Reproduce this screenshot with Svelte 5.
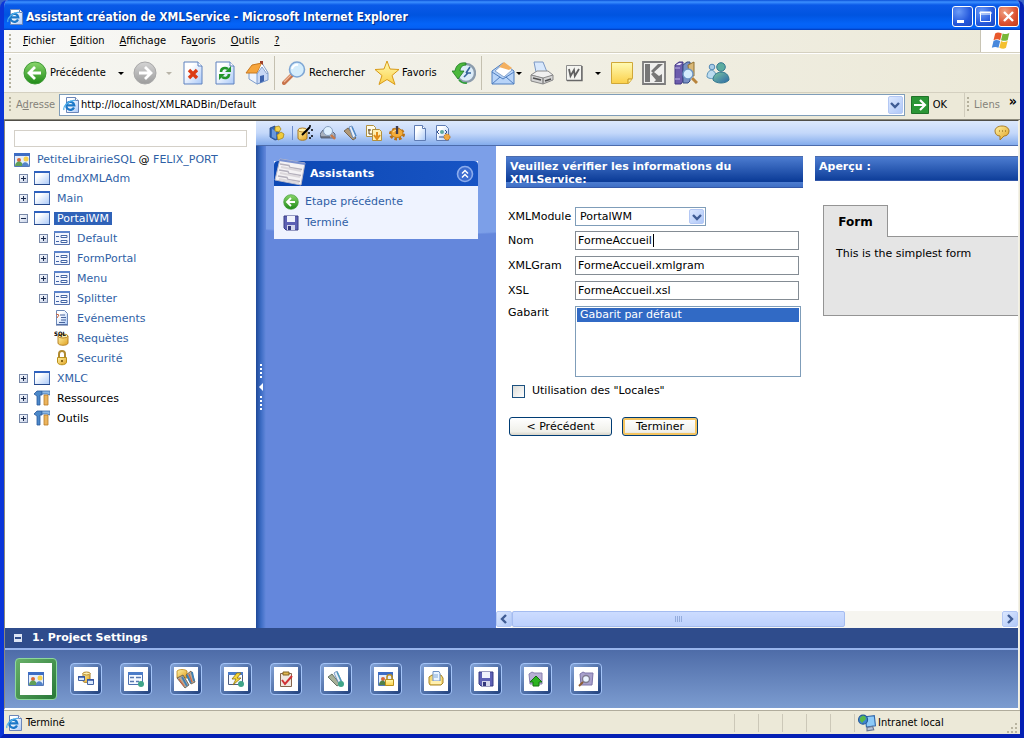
<script>
  let nom = "FormeAccueil";
  let xmlgram = "FormeAccueil.xmlgram";
  let xsl = "FormeAccueil.xsl";
  let xmlModule = "PortalWM";
  let gabarit = "defaut";
  let locales = false;
  let address = "http://localhost/XMLRADBin/Default";

  const menus = [
    ["", "F", "ichier"],
    ["", "E", "dition"],
    ["", "A", "ffichage"],
    ["Fa", "v", "oris"],
    ["", "O", "utils"],
    ["", "?", ""],
  ];

  let tree = [
    { label: "dmdXMLAdm", icon: "window", open: false },
    { label: "Main", icon: "window", open: false },
    {
      label: "PortalWM",
      icon: "window",
      open: true,
      selected: true,
      children: [
        { label: "Default", icon: "form", open: false },
        { label: "FormPortal", icon: "form", open: false },
        { label: "Menu", icon: "form", open: false },
        { label: "Splitter", icon: "form", open: false },
        { label: "Evénements", icon: "events" },
        { label: "Requètes", icon: "sql", mark: "SQL" },
        { label: "Securité", icon: "lock" },
      ],
    },
    { label: "XMLC", icon: "window", open: false },
    { label: "Ressources", icon: "tools", open: false, plain: true },
    { label: "Outils", icon: "tools", open: false, plain: true },
  ];

  const pageTools = [
    ["wizard", "Assistant"],
    ["printview", "Aperçu"],
    ["build", "Compiler"],
    ["convert", "Convertir"],
    ["gear", "Options"],
    ["page", "Nouveau"],
    ["pagegear", "Propriétés"],
  ];

  const projectTools = [
    ["project", "Projet"],
    ["network", "Connexions"],
    ["formball", "Formulaires"],
    ["dbtools", "Base de données"],
    ["flash", "Actions"],
    ["check", "Vérifier"],
    ["build", "Compiler"],
    ["projectlock", "Sécurité"],
    ["folder", "Documents"],
    ["floppy", "Enregistrer"],
    ["upload", "Publier"],
    ["inspect", "Inspecter"],
  ];

  function toggle(node) {
    node.open = !node.open;
    tree = tree;
  }
</script>

<svg class="defs" width="0" height="0" aria-hidden="true">
  <defs>
    <linearGradient id="gGreen" x1="0" y1="0" x2="0" y2="1">
      <stop offset="0" stop-color="#8ad66c" /><stop offset="1" stop-color="#1f8a17" />
    </linearGradient>
    <linearGradient id="gGrey" x1="0" y1="0" x2="0" y2="1">
      <stop offset="0" stop-color="#d4d4d4" /><stop offset="1" stop-color="#9c9c9c" />
    </linearGradient>
    <linearGradient id="gPage" x1="0" y1="0" x2="1" y2="1">
      <stop offset="0.3" stop-color="#fff" /><stop offset="1" stop-color="#a9c8f8" />
    </linearGradient>
    <linearGradient id="gGold" x1="0" y1="0" x2="1" y2="1">
      <stop offset="0" stop-color="#fff3a6" /><stop offset="1" stop-color="#e0a020" />
    </linearGradient>
    <linearGradient id="gNote" x1="0" y1="0" x2="0" y2="1">
      <stop offset="0" stop-color="#fffbb4" /><stop offset="1" stop-color="#fbd04a" />
    </linearGradient>
    <linearGradient id="gTeal" x1="0" y1="0" x2="1" y2="1">
      <stop offset="0" stop-color="#7cc8a0" /><stop offset="1" stop-color="#2b66a8" />
    </linearGradient>
  </defs>
  <symbol id="ie" viewBox="0 0 16 16">
    <path d="M3.500.5h9l3 3v12h-12z" fill="url(#gPage)" stroke="#6b86b8" />
    <path d="M12.500.5v3h3" fill="#fff" stroke="#6b86b8" />
    <path d="M11 10.500a4 4 0 1 1 .3-2.200H4" fill="none" stroke="#1c78c8" stroke-width="2.200" />
    <path d="M1 13C-.5 9.500 6 3 12 3.500" fill="none" stroke="#50b0ec" stroke-width="1.200" />
  </symbol>
  <symbol id="back" viewBox="0 0 24 24">
    <circle cx="12" cy="12" r="11" fill="url(#gGreen)" stroke="#3f9a36" />
    <path d="M12 6l-6 6 6 6M6.500 12H18" fill="none" stroke="#fff" stroke-width="2.800" />
  </symbol>
  <symbol id="forward" viewBox="0 0 24 24">
    <circle cx="12" cy="12" r="11" fill="url(#gGrey)" stroke="#a8a8a8" />
    <path d="M12 6l6 6-6 6M17.500 12H6" fill="none" stroke="#fff" stroke-width="2.800" />
  </symbol>
  <symbol id="stop" viewBox="0 0 24 24">
    <path d="M3 1h14l4 4v18H3z" fill="url(#gPage)" stroke="#5f82bf" />
    <path d="M17 1v4h4" fill="#fff" stroke="#5f82bf" />
    <path d="M8 9l8 8M16 9l-8 8" stroke="#dc3c14" stroke-width="3.400" />
  </symbol>
  <symbol id="refresh" viewBox="0 0 24 24">
    <path d="M3 1h14l4 4v18H3z" fill="url(#gPage)" stroke="#5f82bf" />
    <path d="M17 1v4h4" fill="#fff" stroke="#5f82bf" />
    <path d="M8 11c0-4 4-5 7-3M16 13c0 4-4 5-7 3" fill="none" stroke="#23962c" stroke-width="2.600" />
    <path d="M12 11h6V5zM12 13H6v6z" fill="#23962c" />
  </symbol>
  <symbol id="home" viewBox="0 0 24 24">
    <path d="M4 12v6l8 5 10-4v-9l-5-6z" fill="#eef4fd" stroke="#7d9ccc" />
    <path d="M12 23V12l5-8 6 8v7z" fill="#c8d8f5" stroke="#7d9ccc" />
    <path d="M1 12L7 4l10-2-5 10z" fill="#f6a53c" stroke="#c87820" />
    <path d="M17 2l6 10-1 1-5-7-5 7" fill="#fff" stroke="#8aa4cc" />
    <path d="M15 0h3v4l-3-2z" fill="#a04028" />
    <path d="M15 15l4-1v6l-4 2z" fill="#3d63ac" />
  </symbol>
  <symbol id="search" viewBox="0 0 24 24">
    <path d="M2 22l8-8" stroke="#c8744c" stroke-width="4" stroke-linecap="round" />
    <path d="M2 21l7-7" stroke="#f2b898" stroke-width="1.200" />
    <circle cx="15" cy="8.500" r="7.500" fill="#d4edfc" stroke="#7ea6d4" stroke-width="1.600" />
    <path d="M10 8a5 5 0 0 1 6-4" fill="none" stroke="#fff" stroke-width="2" />
  </symbol>
  <symbol id="star" viewBox="0 0 24 24">
    <path d="M12 0l3 8 9 .5-7 6 3 9-8-5-8 5 3-9-7-6L9 8z" fill="url(#gNote)" stroke="#d89a18" />
  </symbol>
  <symbol id="history" viewBox="0 0 24 24">
    <circle cx="14" cy="12" r="9" fill="#dcecf8" stroke="#8c9cac" stroke-width="2.400" />
    <path d="M14 12l4-6M14 12h5M12 16l4-4" fill="none" stroke="#36649c" stroke-width="1.600" />
    <path d="M14 2C8 1 4 4 3 10H0l6 8 6-8H8c0-3 2-6 6-6z" fill="#4cb83c" stroke="#1d7a24" stroke-width=".8" />
    <path d="M7 19a9 9 0 0 0 8 3" fill="none" stroke="#2f9c38" stroke-width="1.600" />
  </symbol>
  <symbol id="mail" viewBox="0 0 24 24">
    <path d="M1 10l11-8 11 8v13H1z" fill="#b8d4f8" stroke="#4f7ebf" />
    <path d="M4 10l9-8 8 7-8 7z" fill="#fff" stroke="#86a4cc" />
    <path d="M8 6l5-5 8 6-3 2z" fill="#f4b060" />
    <path d="M1 11l11 7 11-7M1 23l8-7M23 23l-8-7" fill="none" stroke="#4f7ebf" />
  </symbol>
  <symbol id="print" viewBox="0 0 24 24">
    <path d="M6 11L4 1h9l4 10z" fill="#d8e8fc" stroke="#7c98c4" />
    <path d="M1 14l6-4h11l5 4-8 4z" fill="#f0f0f0" stroke="#8c8c8c" />
    <path d="M1 14l12 3v6L1 20zM13 17l10-3v5l-10 4z" fill="#d4d4d4" stroke="#888" />
    <path d="M3 17l8 2M15 20l6-2" stroke="#505050" stroke-width="1.600" />
  </symbol>
  <symbol id="word" viewBox="0 0 24 24">
    <path d="M4.500 4.500h15v15h-15z" fill="#f4f4f0" stroke="#8c8c8c" />
    <path d="M5 19.500h15V5" fill="none" stroke="#686868" stroke-width="1.400" />
    <path d="M7 8l1.500 7L12 9l.8 6L17 8" fill="none" stroke="#606060" stroke-width="1.800" />
  </symbol>
  <symbol id="note" viewBox="0 0 24 24">
    <path d="M1.500 1.500h21v16l-4 5h-17z" fill="url(#gNote)" stroke="#d0a838" />
    <path d="M18 22v-4h4" fill="#fff0a0" stroke="#c09420" />
  </symbol>
  <symbol id="kas" viewBox="0 0 24 24">
    <path d="M1 1h22v22H1z" fill="#f0f0ee" stroke="#7c7c7c" stroke-width="1.800" />
    <path d="M3 3h5v18H3zM9 10l7-7h5l-10 9zM9 13l3-2 5 4 3-2v8h-8l2-2z" fill="#777" />
  </symbol>
  <symbol id="books" viewBox="0 0 24 24">
    <path d="M1 4l4-3h4v19l-2 3H1z" fill="#6c5cac" stroke="#443884" />
    <path d="M2 4l3-2h3L6 4z" fill="#e8e4f8" />
    <path d="M9 4l4-3h3v19l-2 2H9z" fill="#7890c4" stroke="#344c84" />
    <path d="M1 7h5M1 18h5" stroke="#c0b4e8" />
    <path d="M14 4l6-3v14h-5z" fill="#d8b878" stroke="#907030" />
    <path d="M18 17l5 5" stroke="#b8843c" stroke-width="3" />
    <circle cx="14" cy="13" r="5" fill="#d4ecfc" stroke="#6c94c4" stroke-width="1.400" />
  </symbol>
  <symbol id="people" viewBox="0 0 24 24">
    <circle cx="6" cy="6" r="2.800" fill="#a8cce8" stroke="#5488b4" />
    <path d="M1 16c0-9 9-9 9 0-2 2-7 2-9 0z" fill="#bcdcf0" stroke="#5c94b8" />
    <circle cx="15" cy="6" r="4.300" fill="#5caca0" stroke="#347890" />
    <path d="M7 19c0-10 16-11 16 0-3 4-13 4-16 0z" fill="url(#gTeal)" stroke="#347890" />
  </symbol>
  <symbol id="flag" viewBox="0 0 24 24">
    <path d="M5 3c3-2 5-1 8 0l-2 8c-3-2-5-1-8 0z" fill="#e8582c" />
    <path d="M14 3c3 1 5 1 8-1l-2 9c-3 1-5 1-8 0z" fill="#78b838" />
    <path d="M3 12c3-2 5-1 8 0l-2 8c-3-1-5-1-8 0z" fill="#4888dc" />
    <path d="M12 12c3 2 5 1 8 0l-2 8c-3 2-5 1-8 0z" fill="#f4c030" />
  </symbol>
  <symbol id="go" viewBox="0 0 18 18">
    <path d="M.5.5h17v17H.5z" fill="#2b9636" stroke="#1f7228" />
    <path d="M3 9h10M9 4l5 5-5 5" fill="none" stroke="#fff" stroke-width="2.200" />
  </symbol>
  <symbol id="chevron" viewBox="0 0 10 8">
    <path d="M1 2l4 4 4-4" fill="none" stroke="#3f5c94" stroke-width="2.400" />
  </symbol>
  <symbol id="window" viewBox="0 0 16 16">
    <path d="M.5 1.500h15v13H.5z" fill="url(#gPage)" stroke="#4268ac" />
    <path d="M0 1h16v2H0z" fill="#2f62c0" />
    <path d="M0 14.500h16" stroke="#24488c" />
  </symbol>
  <symbol id="form" viewBox="0 0 16 16">
    <path d="M.5 1.500h15v13H.5z" fill="#f2f6ff" stroke="#5672ac" />
    <path d="M0 1h16v2H0z" fill="#5c84cc" />
    <path d="M2 6.500h3M2 11.500h3" stroke="#4466a4" />
    <path d="M7 5.500h6v2H7zM7 10.500h6v2H7z" fill="#fff" stroke="#4466a4" />
  </symbol>
  <symbol id="events" viewBox="0 0 16 16">
    <path d="M2.500.5h8l3 3v11h-11z" fill="url(#gPage)" stroke="#6c88b8" />
    <path d="M2 15h12" stroke="#405c98" />
    <path d="M6 5h5M7 7.500h5M7 10h5M5 12.500h6" stroke="#48649c" />
    <path d="M2 4l3 1-2 3" fill="none" stroke="#c86440" />
  </symbol>
  <symbol id="sql" viewBox="0 0 16 16">
    <path d="M4 6v7c0 3 10 3 10 0V6z" fill="url(#gGold)" stroke="#b88428" />
    <ellipse cx="9" cy="6" rx="5" ry="2" fill="#fff0b0" stroke="#b88428" />
  </symbol>
  <symbol id="lock" viewBox="0 0 16 16">
    <path d="M5 8V4c0-4 6-4 6 0v4" fill="none" stroke="#b08a30" stroke-width="2" />
    <path d="M3.500 7.500h9v5c-1 3-8 3-9 0z" fill="url(#gGold)" stroke="#b8901c" />
    <path d="M8 10v2" stroke="#704c00" stroke-width="1.600" />
  </symbol>
  <symbol id="tools" viewBox="0 0 16 16">
    <path d="M0 4l3-3h5v4H6v10H3V6z" fill="#4c88c8" stroke="#28589c" stroke-width=".8" />
    <path d="M8 1h8v4l-3-1H8z" fill="#8cb8e4" stroke="#3c6cac" stroke-width=".8" />
    <path d="M10 5h4v10h-4z" fill="#ecb45c" stroke="#b87c28" stroke-width=".8" />
  </symbol>
  <symbol id="project" viewBox="0 0 16 16">
    <path d="M.5 1.500h15v13H.5z" fill="#e4eefc" stroke="#5478b8" />
    <path d="M0 1h16v3H0z" fill="#3c6cc4" />
    <circle cx="5" cy="8" r="2" fill="#d86838" />
    <path d="M1 14c0-6 8-6 8 0z" fill="#60a058" />
    <circle cx="12" cy="7" r="2.500" fill="#f4d04c" />
    <path d="M8 14c0-5 6-5 7 0z" fill="#5484c8" />
  </symbol>
  <symbol id="db" viewBox="0 0 16 16">
    <path d="M1 3l5-2v3l4 2v8l-4 1-5-3z" fill="#3468b8" stroke="#204484" stroke-width=".8" />
    <path d="M3 4v8l4 2V6z" fill="#6898dc" />
    <path d="M6 2l4-1 2 3-2 3-4-1z" fill="#f4d44c" stroke="#a88820" stroke-width=".8" />
    <path d="M8 10l4-3 3 2-1 4-5 2z" fill="#f0cc3c" stroke="#a88820" stroke-width=".8" />
  </symbol>
  <symbol id="wizard" viewBox="0 0 16 16">
    <path d="M1 5v8c0 3 9 3 9 0V5z" fill="url(#gGold)" stroke="#a87820" />
    <ellipse cx="5.500" cy="5" rx="4.500" ry="2" fill="#fff0a8" stroke="#b88428" />
    <path d="M5 10l8-8" stroke="#000" stroke-width="2" />
    <path d="M12 1h2M14 5h2M11 8h2M14 11h2M12 13h2" stroke="#000" stroke-width="1.600" />
  </symbol>
  <symbol id="printview" viewBox="0 0 16 16">
    <path d="M0 9l3-4h8l4 4v4H1z" fill="#a8b0bc" stroke="#5c6880" />
    <path d="M1 12h9" stroke="#404858" />
    <circle cx="8" cy="6" r="4.500" fill="#dff0ff" stroke="#88a0c0" />
    <path d="M11 10l4 4" stroke="#c87848" stroke-width="2.400" />
  </symbol>
  <symbol id="build" viewBox="0 0 16 16">
    <path d="M1 6l4-3 8 10-3 2z" fill="#b09878" stroke="#66543c" stroke-width=".8" />
    <path d="M6 2l3-1 4 10-3 2z" fill="#e8eef8" stroke="#5c84b8" stroke-width=".8" />
    <path d="M9 2l4 9" stroke="#4c88c8" stroke-width="1.400" />
  </symbol>
  <symbol id="buildball" viewBox="0 0 16 16">
    <path d="M0 6l4-3 8 10-3 2z" fill="#a8b098" stroke="#4c5c4c" stroke-width=".8" />
    <path d="M6 2l3-2 5 11-3 2z" fill="#e8eef8" stroke="#5c84b8" stroke-width=".8" />
    <path d="M9 1l4 9" stroke="#4c98b8" stroke-width="1.400" />
    <circle cx="13" cy="13" r="3" fill="#3fa488" />
  </symbol>
  <symbol id="convert" viewBox="0 0 16 16">
    <path d="M.5.5h7l2 2v9h-9z" fill="#fffbe8" stroke="#b09040" />
    <path d="M6.500 4.500h7l2 2v9h-9z" fill="#ffeeb0" stroke="#b09040" />
    <path d="M3 4v5h3M2 5h3" fill="none" stroke="#604820" />
    <path d="M11 7v5M8 10l3 4 3-4" fill="none" stroke="#e08c18" stroke-width="2" />
  </symbol>
  <symbol id="gear" viewBox="0 0 16 16">
    <ellipse cx="8" cy="9" rx="6.500" ry="5" fill="none" stroke="#b87018" stroke-width="3" stroke-dasharray="2.600 1.800" />
    <ellipse cx="8" cy="8" rx="6" ry="4.500" fill="#f4ac38" stroke="#c07c18" />
    <path d="M8 9V1" stroke="#403c50" stroke-width="2.400" />
    <path d="M4 7l3-2" stroke="#ffe0a0" />
  </symbol>
  <symbol id="page" viewBox="0 0 16 16">
    <path d="M2.500.5h8l3 3v12h-11z" fill="url(#gPage)" stroke="#5f7cb4" />
    <path d="M10.500.5v3h3" fill="#fff" stroke="#5f7cb4" />
  </symbol>
  <symbol id="pagegear" viewBox="0 0 16 16">
    <path d="M1.500.5h9l3 3v12h-12z" fill="url(#gPage)" stroke="#5f7cb4" />
    <path d="M4 5L2 7l2 2M10 5l2 2-2 2M4 12h5" fill="none" stroke="#305090" />
    <circle cx="7" cy="7" r="2" fill="#5ca8a0" />
    <circle cx="12" cy="12" r="3" fill="#f0a840" stroke="#b87020" stroke-dasharray="1.500 1" />
  </symbol>
  <symbol id="bubble" viewBox="0 0 16 16">
    <path d="M8 1c4 0 7 2 7 5s-2 5-5 5l-4 4v-4C3 11 1 9 1 6s3-5 7-5z" fill="url(#gGold)" stroke="#a87c28" />
    <path d="M5 6h1M8 6h1M11 6h1" stroke="#80580c" />
  </symbol>
  <symbol id="network" viewBox="0 0 16 16">
    <path d="M5 2v8c0 2 7 2 7 0V2z" fill="url(#gGold)" stroke="#a87c28" />
    <ellipse cx="8.500" cy="2.500" rx="3.500" ry="1.500" fill="#fff0b0" stroke="#b88c30" />
    <path d="M.5 5.500h6v4h-6zM9.500 8.500h6v5h-6z" fill="#d8e8fc" stroke="#4464a4" />
    <path d="M0 6h7M9 9h7" stroke="#3050a0" stroke-width="1.600" />
  </symbol>
  <symbol id="formball" viewBox="0 0 16 16">
    <path d="M.5 1.500h14v12H.5z" fill="#f4f8ff" stroke="#4c70b0" />
    <path d="M0 1h15v3H0z" fill="#4c7cc8" />
    <path d="M2 6.500h4M8 6.500h5M2 10.500h4M8 10.500h3" stroke="#5878b0" stroke-width="1.400" />
    <circle cx="13" cy="13" r="3" fill="#3fa488" />
  </symbol>
  <symbol id="dbtools" viewBox="0 0 20 20">
    <path d="M1 2c2-2 8-2 10 0v7H1z" fill="url(#gGold)" stroke="#b8841c" stroke-width=".8" />
    <path d="M1 9l6-3 6 10-4 3zM10 6l5-4 4 11-4 2z" fill="#b8a894" stroke="#5c5448" stroke-width=".8" />
    <path d="M6 8l5 9M11 6l4 8M16 3l2 9" stroke="#3c80b8" stroke-width="1.800" />
    <path d="M3 10l5 7M13 5l3 8" stroke="#d06840" stroke-width="1.200" />
  </symbol>
  <symbol id="flash" viewBox="0 0 16 16">
    <path d="M.5 1.500h14v12H.5z" fill="#f4f8ff" stroke="#4c5c80" />
    <path d="M0 1h15v3H0z" fill="#4c7cc8" />
    <path d="M9 2L4 8h4l-3 6 8-7H9l4-5z" fill="#f8d838" stroke="#8c7010" stroke-width=".8" />
    <circle cx="13" cy="13" r="3" fill="#3fa488" />
  </symbol>
  <symbol id="check" viewBox="0 0 16 16">
    <path d="M2.500 2.500h11v13h-11z" fill="#f0e8e0" stroke="#84644c" />
    <path d="M5 1h6v3H5z" fill="#e0b850" stroke="#806020" />
    <path d="M4 9l3 4 7-8" fill="none" stroke="#d03034" stroke-width="2" />
  </symbol>
  <symbol id="projectlock" viewBox="0 0 16 16">
    <path d="M.5 1.500h14v13H.5z" fill="#e4eefc" stroke="#5478b8" />
    <path d="M0 1h15v3H0z" fill="#3c6cc4" />
    <circle cx="5" cy="8" r="2" fill="#d86838" />
    <path d="M1 14c0-6 7-6 7 0z" fill="#508048" />
    <path d="M9 9V6c0-3 5-3 5 0v3" fill="none" stroke="#b88c20" stroke-width="1.600" />
    <path d="M7.500 8.500h8v6h-8z" fill="url(#gNote)" stroke="#b8901c" />
  </symbol>
  <symbol id="folder" viewBox="0 0 16 16">
    <path d="M1 6l3-2h9l2 3v5l-2 2H2l-1-2z" fill="#f4d878" stroke="#a88424" />
    <path d="M5 10V.5h6l1 2V10z" fill="#eaf4ff" stroke="#6c90c4" />
    <path d="M6 4h4M6 6h4" stroke="#80a8d8" />
    <path d="M3 10h10v3H3z" fill="#fff0b0" />
  </symbol>
  <symbol id="floppy" viewBox="0 0 16 16">
    <path d="M1 1h14v14H3l-2-2z" fill="#5d60b4" stroke="#383c84" />
    <path d="M4 1h8v6H4z" fill="#f0f2fc" />
    <path d="M4 10h8v5H4z" fill="#d4d6ec" />
    <path d="M5 11h3v4H5z" fill="#34387c" />
  </symbol>
  <symbol id="upload" viewBox="0 0 16 16">
    <path d="M1 3l3-2 2 1h8v11H2z" fill="#b8b0d4" stroke="#8880b0" />
    <path d="M8 5l6 6h-3v4H5v-4H2z" fill="#2cb420" stroke="#147010" />
  </symbol>
  <symbol id="inspect" viewBox="0 0 16 16">
    <path d="M2 3l3-2 2 1h8l-1 12H3z" fill="#a8a0cc" stroke="#7c74a8" />
    <circle cx="8" cy="8" r="3.500" fill="#eaf4ff" stroke="#807c90" stroke-width="1.400" />
    <path d="M5 11l-4 4" stroke="#8c5c34" stroke-width="2" />
  </symbol>
  <symbol id="cards" viewBox="0 0 32 28">
    <path d="M6 1l25 4-4 22L1 22z" fill="#f4f2f4" stroke="#b8b8c8" />
    <path d="M6 1l25 4v2L5 3z" fill="#7890d0" />
    <path d="M6 6l9 1.500 1 2 12 2M5 12l9 1.500 1 2 12 2M4 18l9 1.500 1 2 12 2" fill="none" stroke="#b4b0bc" stroke-width="1.400" />
    <path d="M7 9l20 4M6 15l20 4M5 21l20 4" stroke="#dcd8dc" stroke-width="2" />
  </symbol>
  <symbol id="collapse" viewBox="0 0 18 18">
    <circle cx="9" cy="9" r="7.500" fill="#3c6cd0" stroke="#8cacec" stroke-width="1.600" />
    <path d="M6 8.500l3-3 3 3M6 12.500l3-3 3 3" fill="none" stroke="#fff" stroke-width="1.500" />
  </symbol>
  <symbol id="intranet" viewBox="0 0 16 16">
    <path d="M6.500 2.500l8-1 1 9-8 1z" fill="#8ccaf8" stroke="#3068ac" />
    <path d="M8 12l5-1 1 3-6 1z" fill="#b8c4d8" stroke="#687894" />
    <circle cx="4.500" cy="5" r="4" fill="#3c84d0" stroke="#205898" />
    <path d="M2 3c3-3 5-1 5 1S4 6 4 8C2 7 1 5 2 3z" fill="#58b848" />
  </symbol>
</svg>

<div class="window">
  <header class="titlebar">
    <svg width="16" height="16"><use href="#ie" /></svg>
    <h1>Assistant création de XMLService - Microsoft Internet Explorer</h1>
    <button class="ctl" aria-label="Réduire">
      <svg width="19" height="19" viewBox="0 0 19 19"><path d="M4 13h7v3H4z" fill="#fff" /></svg>
    </button>
    <button class="ctl" aria-label="Agrandir">
      <svg width="19" height="19" viewBox="0 0 19 19">
        <path d="M4.500 5.500h10v9h-10zM4 5h11v2H4z" fill="none" stroke="#fff" />
      </svg>
    </button>
    <button class="ctl close" aria-label="Fermer">
      <svg width="19" height="19" viewBox="0 0 19 19">
        <path d="M5 5l9 9M14 5l-9 9" stroke="#fff" stroke-width="2.400" />
      </svg>
    </button>
  </header>

  <nav class="menubar">
    <span class="grip"></span>
    {#each menus as [before, key, after]}
      <button>{before}<u>{key}</u>{after}</button>
    {/each}
    <span class="brand"><svg width="22" height="20"><use href="#flag" /></svg></span>
  </nav>

  <div class="toolbar">
    <span class="grip"></span>
    <button class="back"><svg width="24" height="24"><use href="#back" /></svg>Précédente</button>
    <button class="drop" aria-label="Pages précédentes"><i></i></button>
    <button class="icon" aria-label="Suivante"><svg width="24" height="24"><use href="#forward" /></svg></button>
    <button class="drop off" aria-label="Pages suivantes"><i></i></button>
    <button class="icon" aria-label="Arrêter"><svg width="24" height="24"><use href="#stop" /></svg></button>
    <button class="icon" aria-label="Actualiser"><svg width="24" height="24"><use href="#refresh" /></svg></button>
    <button class="icon" aria-label="Démarrage"><svg width="24" height="24"><use href="#home" /></svg></button>
    <span class="sep"></span>
    <button class="find"><svg width="24" height="24"><use href="#search" /></svg>Rechercher</button>
    <button class="favs"><svg width="24" height="24"><use href="#star" /></svg>Favoris</button>
    <button class="icon" aria-label="Historique"><svg width="24" height="24"><use href="#history" /></svg></button>
    <span class="sep"></span>
    <button class="mail" aria-label="Courrier"><svg width="24" height="24"><use href="#mail" /></svg><i></i></button>
    <button class="icon" aria-label="Imprimer"><svg width="24" height="24"><use href="#print" /></svg></button>
    <button class="icon" aria-label="Modifier"><svg width="24" height="24"><use href="#word" /></svg></button>
    <button class="drop" aria-label="Choix de l'éditeur"><i></i></button>
    <button class="icon" aria-label="Discussion"><svg width="24" height="24"><use href="#note" /></svg></button>
    <button class="icon" aria-label="Protection"><svg width="24" height="24"><use href="#kas" /></svg></button>
    <button class="icon" aria-label="Recherche"><svg width="24" height="24"><use href="#books" /></svg></button>
    <button class="icon" aria-label="Messenger"><svg width="24" height="24"><use href="#people" /></svg></button>
  </div>

  <div class="addressbar">
    <span class="grip"></span>
    <label for="address">A<u>d</u>resse</label>
    <div class="combo">
      <svg width="16" height="16"><use href="#ie" /></svg>
      <input id="address" bind:value={address} />
      <button class="arrow" aria-label="Adresses récentes"><svg width="10" height="8"><use href="#chevron" /></svg></button>
    </div>
    <button class="ok"><svg width="18" height="18"><use href="#go" /></svg>OK</button>
    <div class="links"><span class="grip"></span>Liens <b>»</b></div>
  </div>

  <div class="page">
    <div class="panes">
      <aside class="explorer">
        <input class="filter" aria-label="Filtre" />
        <p class="root">
          <svg width="16" height="16"><use href="#project" /></svg>
          <span><a href="#projet">PetiteLibrairieSQL</a> @ <a href="#serveur">FELIX_PORT</a></span>
        </p>
        <ul class="tree">
          {#each tree as node}
            <li>
              <div class="row">
                <button class="twist" aria-label={node.label} on:click={() => toggle(node)}>
                  <svg width="9" height="9" viewBox="0 0 9 9">
                    <path d={node.open ? "M2 4.500h5" : "M2 4.500h5M4.500 2v5"} stroke="#1c2c50" />
                  </svg>
                </button>
                <svg width="16" height="16"><use href={"#" + node.icon} /></svg>
                <a href="#noeud" class:selected={node.selected} class:plain={node.plain}>{node.label}</a>
              </div>
              {#if node.open && node.children}
                <ul class="tree">
                  {#each node.children as child}
                    <li>
                      <div class="row">
                        {#if child.open === undefined}
                          <span class="leaf"></span>
                        {:else}
                          <button class="twist" aria-label={child.label} on:click={() => toggle(child)}>
                            <svg width="9" height="9" viewBox="0 0 9 9">
                              <path d={child.open ? "M2 4.500h5" : "M2 4.500h5M4.500 2v5"} stroke="#1c2c50" />
                            </svg>
                          </button>
                        {/if}
                        <svg width="16" height="16">
                          <use href={"#" + child.icon} />
                          {#if child.mark}<text class="mark" x="0" y="6">{child.mark}</text>{/if}
                        </svg>
                        <a href="#noeud">{child.label}</a>
                      </div>
                    </li>
                  {/each}
                </ul>
              {/if}
            </li>
          {/each}
        </ul>
      </aside>

      <div class="work">
        <div class="pagebar">
          <button aria-label="Base"><svg width="16" height="16"><use href="#db" /></svg></button>
          <span class="rule"></span>
          {#each pageTools as [icon, title]}
            <button class="tool" aria-label={title}><svg width="16" height="16"><use href={"#" + icon} /></svg></button>
          {/each}
          <button class="help" aria-label="Aide"><svg width="16" height="16"><use href="#bubble" /></svg></button>
        </div>

        <div class="body">
          <button class="splitter" aria-label="Masquer l'explorateur">
            <svg width="5" height="46" viewBox="0 0 5 46">
              <path d="M3 0v16M3 32v14" stroke="#fff" stroke-width="2" stroke-dasharray="2 2" />
              <path d="M5 19v8l-4-4z" fill="#fff" />
            </svg>
          </button>

          <section class="tasks">
            <div class="card">
              <h2>
                <svg class="cards" width="32" height="28"><use href="#cards" /></svg>
                Assistants
                <button aria-label="Réduire le groupe"><svg width="18" height="18"><use href="#collapse" /></svg></button>
              </h2>
              <ul>
                <li><svg width="16" height="16"><use href="#back" /></svg><a href="#precedent">Etape précédente</a></li>
                <li><svg width="16" height="16"><use href="#floppy" /></svg><a href="#termine">Terminé</a></li>
              </ul>
            </div>
          </section>

          <main>
            <div class="columns">
              <form on:submit|preventDefault>
                <h3>Veuillez vérifier les informations du XMLService:</h3>
                <div class="fields">
                  <label for="module">XMLModule</label>
                  <div class="choice">
                    <select id="module" bind:value={xmlModule}>
                      <option>PortalWM</option>
                      <option>Main</option>
                    </select>
                    <span class="arrow"><svg width="10" height="8"><use href="#chevron" /></svg></span>
                  </div>
                  <label for="nom">Nom</label>
                  <input id="nom" class="caret" bind:value={nom} />
                  <label for="xmlgram">XMLGram</label>
                  <input id="xmlgram" bind:value={xmlgram} />
                  <label for="xsl">XSL</label>
                  <input id="xsl" bind:value={xsl} />
                  <label for="gabarit" class="top">Gabarit</label>
                  <select id="gabarit" size="4" bind:value={gabarit}>
                    <option value="defaut">Gabarit par défaut</option>
                  </select>
                </div>
                <label class="tick">
                  <input type="checkbox" bind:checked={locales} />
                  Utilisation des "Locales"
                </label>
                <div class="actions">
                  <button type="button" class="prev">&lt; Précédent</button>
                  <button class="finish">Terminer</button>
                </div>
              </form>

              <section class="preview">
                <h3>Aperçu :</h3>
                <div class="tab">Form</div>
                <div class="sheet">This is the simplest form</div>
              </section>
            </div>

            <div class="scroll">
              <button class="arrow left" aria-label="Vers la gauche"><svg width="10" height="8"><use href="#chevron" /></svg></button>
              <div class="track"><div class="thumb"></div></div>
              <button class="arrow right" aria-label="Vers la droite"><svg width="10" height="8"><use href="#chevron" /></svg></button>
            </div>
          </main>
        </div>
      </div>
    </div>

    <h2 class="settings"><button aria-label="Réduire"></button>1. Project Settings</h2>
    <ul class="dock">
      {#each projectTools as [icon, title], i}
        <li>
          <button class:current={i === 0} aria-label={title}>
            {#if icon === "dbtools"}
              <svg width="20" height="20"><use href="#dbtools" /></svg>
            {:else}
              <svg width="16" height="16"><use href={icon === "build" ? "#buildball" : "#" + icon} /></svg>
            {/if}
          </button>
        </li>
      {/each}
    </ul>
  </div>

  <footer>
    <svg width="16" height="16"><use href="#ie" /></svg>
    <span class="state">Terminé</span>
    <span class="cell"></span>
    <span class="cell"></span>
    <span class="cell"></span>
    <span class="cell"></span>
    <span class="cell"></span>
    <span class="zone"><svg width="18" height="18"><use href="#intranet" /></svg>Intranet local</span>
    <svg class="size" width="12" height="12" viewBox="0 0 12 12">
      <path d="M9 1h2v2H9zM9 5h2v2H9zM5 5h2v2H5zM9 9h2v2H9zM5 9h2v2H5zM1 9h2v2H1z" fill="#b8b4a0" />
    </svg>
  </footer>
</div>

<style>
  :global(body) {
    background: #3c66c8;
  }

  .defs {
    position: absolute;
  }

  .window {
    display: flex;
    flex-direction: column;
    min-height: 100vh;
    box-sizing: border-box;
    border: solid #0a35d8;
    border-width: 0 4px 4px;
    border-bottom-color: #0420b4;
    border-right-color: #0420b4;
    border-radius: 8px 8px 0 0;
    background: #ece9d8;
    font: 11px/14px "DejaVu Sans Condensed", Tahoma, sans-serif;
    color: #000;
    overflow: hidden;
  }

  button,
  input,
  select {
    font: inherit;
    color: inherit;
    margin: 0;
    padding: 0;
    border: 0;
    border-radius: 0;
    background: none;
    outline: none;
    box-sizing: border-box;
  }

  h1,
  h2,
  h3,
  p,
  ul {
    margin: 0;
    padding: 0;
    list-style: none;
    font-size: inherit;
  }

  svg {
    display: block;
    flex: none;
  }

  a {
    color: #2f5fa6;
    text-decoration: none;
  }

  /* title bar */
  .titlebar {
    display: flex;
    align-items: center;
    gap: 2px;
    height: 30px;
    box-sizing: border-box;
    margin: 0 -4px;
    padding: 3px 5px 0 7px;
    background: linear-gradient(#0a50d8, #3c90ff 2px, #0a5ae8 5px, #0054e0 15px, #0464f8 24px, #0460f4 28px, #0038b8);
  }
  .titlebar h1 {
    flex: 1;
    padding-left: 1px;
    font-size: 12px;
    font-weight: bold;
    color: #fff;
    text-shadow: 1px 1px 1px #0a2a80;
  }
  .ctl {
    width: 21px;
    height: 21px;
    border: 1px solid #fff;
    border-radius: 3px;
    background: radial-gradient(circle at 30% 25%, #6c9cf8, #2458dc 60%, #1c48c0);
  }
  .close {
    background: radial-gradient(circle at 30% 25%, #f0a080, #dc5030 60%, #c03c18);
  }

  .grip {
    width: 2px;
    align-self: stretch;
    margin: 4px 5px;
    background: repeating-linear-gradient(#b4b09c 0 2px, transparent 2px 4px);
  }

  /* menu */
  .menubar {
    display: flex;
    align-items: center;
    height: 23px;
    box-sizing: border-box;
    border-bottom: 1px solid #d4d0c0;
    background: linear-gradient(90deg, #f8f8f6, #ece9d8);
  }
  .menubar button {
    padding: 0 8px 0 7px;
  }
  .brand {
    margin-left: auto;
    width: 39px;
    align-self: stretch;
    display: flex;
    align-items: center;
    justify-content: center;
    background: #fff;
    border-left: 1px solid #c8c4b4;
  }

  /* standard buttons */
  .toolbar {
    display: flex;
    align-items: center;
    height: 40px;
    box-sizing: border-box;
    border-top: 1px solid #fff;
    border-bottom: 1px solid #d4d0c0;
    background: linear-gradient(90deg, #f6f6f2, #ece9d8);
  }
  .toolbar .grip {
    margin-right: 9px;
  }
  .toolbar button {
    display: flex;
    align-items: center;
    justify-content: center;
    height: 32px;
  }
  .toolbar .icon {
    width: 32px;
  }
  .toolbar .drop {
    width: 16px;
  }
  .toolbar i {
    border: 3px solid transparent;
    border-top-color: #000;
    border-bottom: 0;
  }
  .toolbar .off i {
    border-top-color: #b8b4a8;
  }
  .toolbar .back,
  .toolbar .find {
    width: 93px;
    gap: 3px;
    padding-left: 3px;
    justify-content: flex-start;
  }
  .toolbar .favs {
    width: 76px;
    gap: 3px;
    padding-left: 3px;
    justify-content: flex-start;
  }
  .toolbar .mail {
    width: 40px;
    gap: 1px;
  }
  .sep {
    width: 1px;
    height: 34px;
    margin: 0 4px 0 1px;
    background: #c4c0b0;
  }

  /* address */
  .addressbar {
    display: flex;
    align-items: center;
    height: 27px;
    box-sizing: border-box;
    padding-bottom: 2px;
    border-bottom: 1px solid #8c8a7c;
  }
  .addressbar label {
    color: #84827a;
    width: 43px;
  }
  .combo {
    flex: 1;
    display: flex;
    align-items: center;
    height: 22px;
    box-sizing: border-box;
    padding: 0 1px 0 3px;
    border: 1px solid #7f9db9;
    background: #fff;
  }
  .combo input {
    flex: 1;
    min-width: 0;
    padding-left: 2px;
  }
  .arrow {
    display: flex;
    align-items: center;
    justify-content: center;
    width: 15px;
    height: 18px;
    border: 1px solid #b4c8f4;
    border-radius: 2px;
    background: linear-gradient(135deg, #dce8ff, #b0c8f8);
  }
  .ok {
    display: flex;
    align-items: center;
    gap: 4px;
    padding: 0 14px 0 6px;
  }
  .links {
    display: flex;
    align-items: center;
    align-self: stretch;
    border-left: 1px solid #d0ccbc;
    color: #84827a;
    padding-right: 3px;
    margin-left: 3px;
  }
  .links .grip {
    margin-left: 2px;
  }
  .links b {
    color: #000;
    font-size: 14px;
    margin-left: 9px;
    padding-bottom: 8px;
  }

  /* page */
  .page {
    flex: 1;
    display: flex;
    flex-direction: column;
    margin-right: 1px;
    border-left: 1px solid #8c8a7c;
    border-top: 1px solid #504e48;
    border-right: 1px solid #f4f2e8;
    border-bottom: 2px solid #fff;
    font-family: "DejaVu Sans", Verdana, sans-serif;
  }
  .panes {
    flex: 1;
    display: flex;
  }
  .explorer {
    width: 251px;
    flex: none;
    box-sizing: border-box;
    padding: 9px;
    background: #fff;
  }
  .filter {
    display: block;
    width: 100%;
    height: 17px;
    border: 1px solid #d4d0c8;
  }
  .root {
    display: flex;
    align-items: center;
    gap: 7px;
    height: 17px;
    padding-top: 4px;
  }
  .tree .tree {
    padding-left: 20px;
  }
  .tree {
    padding-left: 5px;
  }
  .row {
    display: flex;
    align-items: center;
    height: 20px;
  }
  .twist {
    width: 9px;
    height: 9px;
    margin-right: 6px;
    background: linear-gradient(135deg, #fff, #c4d0e8);
    box-shadow: inset 0 0 0 1px #7888a8;
  }
  .leaf {
    width: 15px;
  }
  .mark {
    font: bold 6px "DejaVu Sans Condensed", sans-serif;
  }
  .row a {
    margin-left: 4px;
    padding: 0 3px;
    line-height: 13px;
  }
  .row .plain {
    color: #000;
  }
  .row .selected {
    background: #2f62b8;
    color: #fff;
  }

  .work {
    flex: 1;
    min-width: 0;
    display: flex;
    flex-direction: column;
  }
  .pagebar {
    display: flex;
    align-items: center;
    height: 25px;
    box-sizing: border-box;
    padding: 0 8px 0 13px;
    gap: 7px;
    border-bottom: 1px solid #4c6cac;
    background: linear-gradient(#dce8fc, #c4d8fa 50%, #84acec);
  }
  .rule {
    width: 1px;
    height: 14px;
    margin-right: -3px;
    background: #6c8ccc;
  }
  .help {
    margin-left: auto;
  }
  .body {
    flex: 1;
    display: flex;
  }
  .splitter {
    width: 10px;
    background: linear-gradient(90deg, #1e4898, #3c6cc4 50%, #6488dc);
    display: flex;
    align-items: center;
    padding-left: 2px;
  }
  .tasks {
    width: 230px;
    box-sizing: border-box;
    padding: 15px 18px 0 8px;
    background: radial-gradient(ellipse 400px 90px at 60% 0, #7c9fe8 98%, transparent) #6487dc;
  }
  .card {
    background: #eff3ff;
  }
  .card h2 {
    display: flex;
    align-items: center;
    height: 25px;
    gap: 4px;
    padding-right: 4px;
    border-radius: 4px 4px 0 0;
    background: linear-gradient(90deg, #0c48b4, #1854c4);
    color: #fff;
  }
  .cards {
    margin-top: -4px;
  }
  .card h2 button {
    margin-left: auto;
  }
  .card ul {
    padding: 5px 9px 6px;
  }
  .card li {
    display: flex;
    align-items: center;
    gap: 6px;
    height: 21px;
  }

  main {
    flex: 1;
    min-width: 0;
    display: flex;
    flex-direction: column;
    background: #fff;
  }
  .columns {
    flex: 1;
    display: flex;
    gap: 12px;
    padding: 10px 0 0 10px;
  }
  form {
    width: 297px;
    flex: none;
  }
  h3 {
    padding: 3px 4px 1px;
    line-height: 13px;
    min-height: 19px;
    color: #fff;
    border-top: 1px solid #4c6cac;
    border-bottom: 1px solid #3458a8;
    background: linear-gradient(#4c7cd0, #0c3c98 24px) 0 0 / 100% 25px;
  }
  .fields {
    display: grid;
    grid-template-columns: 67px 1fr;
    row-gap: 6px;
    padding: 19px 0 0 2px;
  }
  .fields label {
    padding-top: 3px;
  }
  .fields .top {
    padding-top: 0;
  }
  .fields input {
    height: 19px;
    width: 224px;
    padding: 0 2px;
    border: 1px solid #848c94;
  }
  .fields .caret {
    background: linear-gradient(#000, #000) 77px 2px / 1px 13px no-repeat;
  }
  .choice {
    display: grid;
    align-items: center;
    width: 131px;
    height: 18px;
  }
  .choice select,
  .choice .arrow {
    grid-area: 1 / 1;
  }
  .choice select {
    appearance: none;
    width: 100%;
    height: 19px;
    padding: 0 4px;
    border: 1px solid #7f9db9;
  }
  .choice .arrow {
    justify-self: end;
    width: 13px;
    height: 13px;
    margin-right: 2px;
    pointer-events: none;
  }
  #gabarit {
    width: 226px;
    height: 71px;
    padding: 1px;
    border: 1px solid #7f9db9;
    overflow: hidden;
  }
  #gabarit option {
    padding: 0 3px;
    min-height: 14px;
  }
  #gabarit option:checked {
    background: linear-gradient(#316ac5, #316ac5);
    color: #fff;
  }
  .tick {
    display: flex;
    align-items: center;
    gap: 7px;
    padding: 7px 0 0 6px;
  }
  .tick input {
    appearance: none;
    width: 13px;
    height: 13px;
    border: 1px solid #1c5180;
    background: linear-gradient(135deg, #dcdcd7, #fff);
  }
  .tick input:checked {
    background: #316ac5;
  }
  .actions {
    display: flex;
    gap: 10px;
    padding: 19px 0 0 3px;
  }
  .actions button {
    height: 19px;
    border: 1px solid #003c74;
    border-radius: 3px;
    background: linear-gradient(#fff, #f0f0ea 80%, #d8d4c8);
  }
  .actions .prev {
    width: 103px;
  }
  .actions .finish {
    width: 76px;
    box-shadow: inset 0 0 0 2px #f4c460;
  }

  .preview {
    flex: 1;
    min-width: 0;
  }
  .tab {
    position: relative;
    width: 65px;
    height: 32px;
    box-sizing: border-box;
    margin: 24px 0 -1px 8px;
    border: 1px solid #949494;
    border-bottom: 0;
    background: #e5e5e5;
    font-size: 12px;
    font-weight: bold;
    line-height: 32px;
    text-align: center;
  }
  .sheet {
    height: 80px;
    box-sizing: border-box;
    margin-left: 8px;
    padding: 10px 12px;
    border: 1px solid #949494;
    border-right: 0;
    background: #e5e5e5;
  }

  .scroll {
    display: flex;
    height: 17px;
  }
  .scroll .arrow {
    width: 16px;
    height: 16px;
  }
  .left svg {
    transform: rotate(90deg);
  }
  .right svg {
    transform: rotate(-90deg);
  }
  .track {
    flex: 1;
    background: #f6f5f0;
  }
  .thumb {
    width: 68%;
    height: 16px;
    box-sizing: border-box;
    border: 1px solid #a4bcf0;
    border-radius: 2px;
    background:
      repeating-linear-gradient(90deg, #94acdc 0 1px, transparent 1px 2px) 50% 50% / 8px 6px no-repeat,
      linear-gradient(#ccdcff, #bcd0fc);
  }

  .settings {
    display: flex;
    align-items: center;
    gap: 10px;
    height: 20px;
    padding-left: 9px;
    background: #2f4c8c;
    color: #fff;
  }
  .settings button {
    width: 8px;
    height: 8px;
    background: linear-gradient(#2f4c8c, #2f4c8c) 50% 50% / 6px 2px no-repeat #dce4f4;
  }
  .dock {
    display: flex;
    align-items: center;
    height: 58px;
    padding-left: 6px;
    border-top: 2px solid #98b4ec;
    background: linear-gradient(#4e6ca8, #7c9cd0);
  }
  .dock li {
    width: 50px;
    display: flex;
    justify-content: center;
  }
  .dock button {
    display: flex;
    align-items: center;
    justify-content: center;
    width: 32px;
    height: 32px;
    border: 1px solid #a4c4f8;
    border-radius: 4px;
    background:
      linear-gradient(#fff, #fff) 50% 50% / 24px 24px no-repeat,
      linear-gradient(135deg, #84a4d8, #20407c);
  }
  .dock .current {
    width: 42px;
    height: 42px;
    border-color: #8cd89c;
    background:
      linear-gradient(#fff, #fff) 50% 50% / 32px 32px no-repeat,
      linear-gradient(135deg, #68b068, #287838);
  }

  /* status bar */
  footer {
    display: flex;
    align-items: center;
    height: 24px;
    padding: 0 2px;
    box-sizing: border-box;
    border-top: 1px solid #b0ac9c;
  }
  .state {
    flex: 1;
    padding-left: 4px;
  }
  .cell {
    width: 23px;
    height: 18px;
    border-left: 1px solid #ccc8b8;
  }
  .zone {
    display: flex;
    align-items: center;
    gap: 2px;
    width: 148px;
    height: 18px;
    padding-left: 3px;
    border-left: 1px solid #ccc8b8;
  }
  .size {
    align-self: flex-end;
  }
</style>
